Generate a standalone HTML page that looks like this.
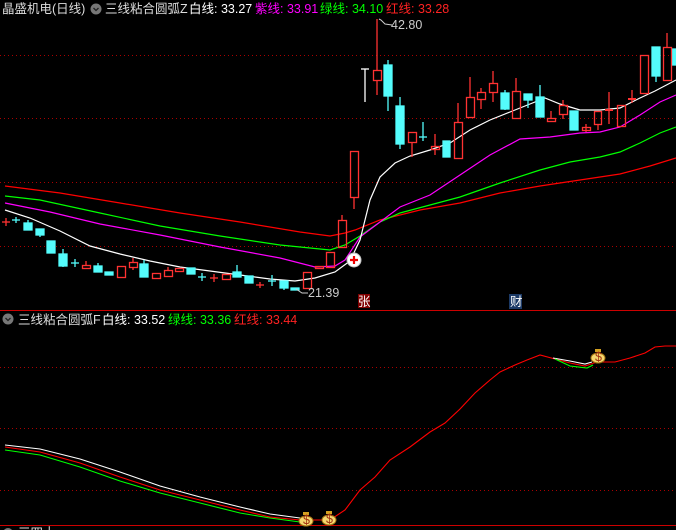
<!DOCTYPE html>
<html><head><meta charset="utf-8"><style>
html,body{margin:0;padding:0;background:#000;width:676px;height:530px;overflow:hidden}
svg{display:block}
text{font-family:"Liberation Sans","Noto Sans CJK SC",sans-serif;font-size:12.5px}
</style></head><body>
<svg width="676" height="530" viewBox="0 0 676 530" xmlns="http://www.w3.org/2000/svg">
<rect width="676" height="530" fill="#000"/>
<g stroke="#a00" stroke-width="1" stroke-dasharray="1,3">
<line x1="0" y1="55.5" x2="676" y2="55.5"/><line x1="0" y1="118.5" x2="676" y2="118.5"/>
<line x1="0" y1="182.5" x2="676" y2="182.5"/><line x1="0" y1="246.5" x2="676" y2="246.5"/>
<line x1="0" y1="367.5" x2="676" y2="367.5"/><line x1="0" y1="428.5" x2="676" y2="428.5"/>
<line x1="0" y1="490.5" x2="676" y2="490.5"/>
</g>
<line x1="0" y1="310.5" x2="676" y2="310.5" stroke="#c00"/>
<line x1="0" y1="525.5" x2="676" y2="525.5" stroke="#c00"/>

<g fill="none" stroke-width="1.2">
<polyline stroke="#f00" points="5,186 60,193 120,203 180,213 240,222 300,232 330,236 345,233 355,230 380,220 420,210 460,203 500,193 540,186 580,180 620,174 650,166 676,158"/>
<polyline stroke="#0f0" points="5,196 40,200 100,213 160,226 220,236 280,245 330,250 345,245 360,236 380,222 400,213 430,205 460,197 500,183 540,170 570,162 600,157 620,152 640,143 660,133 676,127"/>
<polyline stroke="#f0f" points="5,203 50,212 100,224 160,235 220,247 280,258 315,267 335,266 345,260 360,237 380,222 400,207 430,195 460,175 490,155 520,139 550,137 580,133 600,132 620,127 640,115 660,102 676,95"/>
<polyline stroke="#fff" points="5,210 30,218 60,231 90,246 120,254 150,261 180,267 210,271 240,275 270,279 295,281 315,278 335,272 350,261 360,240 370,200 380,177 395,163 410,156 430,150 450,143 470,130 490,120 510,112 530,104 545,98 560,104 580,110 600,110 620,108 640,98 655,91 676,80"/>
</g>

<g stroke-width="1.3">
<!-- cyan filled candles: x,top,bottom,wickTop,wickBot -->
<g fill="#54fcfc" stroke="#54fcfc">
<line x1="16" y1="217" x2="16" y2="223"/><line x1="12" y1="220" x2="20" y2="220"/>
<rect x="24" y="223" width="8" height="7"/><line x1="28" y1="220" x2="28" y2="223"/>
<rect x="36" y="229" width="8" height="6"/><line x1="40" y1="235" x2="40" y2="237"/>
<rect x="47" y="241" width="8" height="12"/>
<rect x="59" y="254" width="8" height="12"/><line x1="63" y1="249" x2="63" y2="267"/>
<line x1="75" y1="259" x2="75" y2="267"/><line x1="71" y1="263" x2="79" y2="263"/>
<rect x="94" y="266" width="8" height="6"/><line x1="98" y1="263" x2="98" y2="266"/>
<rect x="105" y="272" width="8" height="3"/>
<rect x="140" y="264" width="8" height="13"/><line x1="144" y1="260" x2="144" y2="264"/>
<rect x="187" y="268" width="8" height="6"/>
<line x1="202" y1="273" x2="202" y2="281"/><line x1="198" y1="277" x2="206" y2="277"/>
<rect x="233" y="272" width="8" height="5"/><line x1="237" y1="265" x2="237" y2="272"/>
<rect x="245" y="276" width="8" height="7"/>
<line x1="272" y1="275" x2="272" y2="286"/><line x1="268" y1="281" x2="276" y2="281"/>
<rect x="280" y="281" width="8" height="7"/><line x1="284" y1="288" x2="284" y2="290"/>
<rect x="291" y="288" width="8" height="2"/>
<rect x="384" y="65" width="8" height="31"/><line x1="388" y1="60" x2="388" y2="111"/>
<rect x="396" y="106" width="8" height="38"/><line x1="400" y1="97" x2="400" y2="149"/>
<line x1="423" y1="122" x2="423" y2="141"/><line x1="419" y1="137" x2="427" y2="137"/>
<rect x="443" y="141" width="7" height="16"/>
<rect x="501" y="93" width="8" height="16"/><line x1="505" y1="90" x2="505" y2="110"/>
<rect x="524" y="94" width="8" height="6"/><line x1="528" y1="100" x2="528" y2="108"/>
<rect x="536" y="97" width="8" height="20"/><line x1="540" y1="85" x2="540" y2="97"/>
<rect x="570" y="111" width="8" height="19"/>
<rect x="652" y="47" width="8" height="29"/><line x1="656" y1="76" x2="656" y2="82"/>
<rect x="672" y="49" width="5" height="16"/>
</g>
<g fill="none" stroke="#ff3232">
<line x1="6" y1="218" x2="6" y2="226"/><line x1="2" y1="222" x2="10" y2="222"/>
<rect x="82.5" y="265.5" width="8" height="3"/><line x1="86" y1="261" x2="86" y2="265"/>
<rect x="117.5" y="266.5" width="8" height="11"/>
<rect x="129.5" y="262.5" width="8" height="5"/><line x1="133" y1="258" x2="133" y2="262"/><line x1="133" y1="268" x2="133" y2="270"/>
<rect x="152.5" y="273.5" width="8" height="5"/>
<rect x="164.5" y="270.5" width="8" height="6"/><line x1="168" y1="267" x2="168" y2="270"/>
<rect x="175.5" y="268.5" width="8" height="3"/>
<line x1="214" y1="274" x2="214" y2="282"/><line x1="210" y1="278" x2="218" y2="278"/>
<rect x="222.5" y="274.5" width="8" height="5"/>
<line x1="260" y1="282" x2="260" y2="288"/><line x1="256" y1="285" x2="264" y2="285"/>
<rect x="303.5" y="272.5" width="8" height="16"/>
<rect x="315.5" y="266.5" width="8" height="2"/>
<rect x="326.5" y="252.5" width="8" height="15"/>
<rect x="338.5" y="220.5" width="8" height="27"/><line x1="342" y1="215" x2="342" y2="220"/>
<rect x="350.5" y="151.5" width="8" height="46"/><line x1="354" y1="198" x2="354" y2="209"/>
<rect x="373.5" y="70.5" width="8" height="10"/><line x1="377" y1="19" x2="377" y2="70"/><line x1="377" y1="81" x2="377" y2="95"/>
<rect x="408.5" y="132.5" width="8" height="10"/><line x1="412" y1="143" x2="412" y2="157"/>
<rect x="431.5" y="146.5" width="8" height="3"/><line x1="435" y1="134" x2="435" y2="146"/><line x1="435" y1="150" x2="435" y2="155"/>
<rect x="454.5" y="122.5" width="8" height="36"/><line x1="458" y1="103" x2="458" y2="122"/>
<rect x="466.5" y="97.5" width="8" height="20"/><line x1="470" y1="77" x2="470" y2="97"/>
<rect x="477.5" y="92.5" width="8" height="7"/><line x1="481" y1="88" x2="481" y2="92"/><line x1="481" y1="100" x2="481" y2="109"/>
<rect x="489.5" y="83.5" width="8" height="9"/><line x1="493" y1="71" x2="493" y2="83"/><line x1="493" y1="93" x2="493" y2="102"/>
<rect x="512.5" y="91.5" width="8" height="27"/><line x1="516" y1="78" x2="516" y2="91"/>
<rect x="547.5" y="118.5" width="8" height="3"/><line x1="551" y1="111" x2="551" y2="118"/>
<rect x="559.5" y="105.5" width="8" height="9"/><line x1="563" y1="100" x2="563" y2="105"/><line x1="563" y1="115" x2="563" y2="119"/>
<rect x="582.5" y="127.5" width="8" height="3"/><line x1="586" y1="124" x2="586" y2="132"/>
<rect x="594.5" y="111.5" width="7" height="13"/><line x1="598" y1="125" x2="598" y2="130"/>
<line x1="609" y1="92" x2="609" y2="124"/><line x1="605" y1="110" x2="613" y2="110" stroke-width="2"/>
<rect x="617.5" y="105.5" width="8" height="21"/>
<line x1="632" y1="90" x2="632" y2="103"/><line x1="628" y1="99" x2="636" y2="99" stroke-width="2"/>
<rect x="640.5" y="55.5" width="8" height="38"/>
<rect x="663.5" y="47.5" width="8" height="33"/><line x1="667" y1="33" x2="667" y2="47"/>
</g>
<line x1="365" y1="69" x2="365" y2="102" stroke="#fff"/><line x1="361" y1="69" x2="369" y2="69" stroke="#fff"/>
</g>

<!-- markers -->
<polyline points="379,19 381,20 385,24 392,25" fill="none" stroke="#ccc"/>
<text x="391" y="29" fill="#ccc">42.80</text>
<polyline points="296,289 302,293 308,293" fill="none" stroke="#ccc"/>
<text x="308" y="297" fill="#ccc">21.39</text>
<circle cx="354" cy="260" r="7" fill="#fff" stroke="#bbb"/>
<path d="M350 260h8M354 256v8" stroke="#e00" stroke-width="2.2"/>
<rect x="358" y="294" width="12" height="14" fill="#800000"/>
<text x="358" y="306" fill="#fff" font-size="12">张</text>
<rect x="509" y="294" width="13" height="15" fill="#1c3a66"/>
<text x="510" y="306" fill="#fff" font-size="12">财</text>

<!-- lower panel -->
<g fill="none" stroke-width="1.1">
<polyline stroke="#fff" points="5,445 40,449 80,459 120,472 160,486 200,497 240,507 270,514 300,518"/>
<polyline stroke="#0f0" points="5,450 40,455 80,467 120,481 160,493 200,503 240,513 270,518 300,522"/>
<polyline stroke="#f00" points="5,447 40,452 80,463 120,477 160,490 200,500 240,510 270,517 300,520 330,520 345,510 360,490 375,477 390,460 410,447 430,432 445,423 460,409 475,393 490,380 500,372 515,365 527,360 540,355 555,359 570,363 585,366 597,362 615,362 630,358 645,353 655,347 665,346 676,346"/>
<polyline stroke="#fff" points="553,358 570,361 585,364 592,362"/>
<polyline stroke="#0f0" points="555,359 570,366 587,368 593,365"/>
</g>
<g>
<ellipse cx="306" cy="521" rx="7" ry="5" fill="#f5d76e" stroke="#a07010"/><rect x="303" y="512" width="6" height="3" fill="#d4a020"/>
<text x="303" y="524" fill="#a03010" font-size="8">$</text>
<ellipse cx="329" cy="520" rx="7" ry="5" fill="#f5d76e" stroke="#a07010"/><rect x="326" y="511" width="6" height="3" fill="#d4a020"/>
<text x="326" y="523" fill="#a03010" font-size="8">$</text>
<ellipse cx="598" cy="358" rx="7" ry="5" fill="#f5d76e" stroke="#a07010"/><rect x="595" y="349" width="6" height="3" fill="#d4a020"/>
<text x="595" y="361" fill="#a03010" font-size="8">$</text>
</g>

<!-- headers -->
<text x="2" y="13" fill="#ddd">晶盛机电(日线)</text>
<circle cx="96" cy="9" r="5.5" fill="#777"/><path d="M93.5 8l2.5 2.5 2.5-2.5" stroke="#222" fill="none" stroke-width="1.3"/>
<text x="105" y="13" fill="#ddd">三线粘合圆弧Z</text>
<text x="189" y="13" fill="#fff">白线: 33.27</text>
<text x="255" y="13" fill="#f0f">紫线: 33.91</text>
<text x="320" y="13" fill="#0f0">绿线: 34.10</text>
<text x="386" y="13" fill="#f22">红线: 33.28</text>

<circle cx="8" cy="319" r="5.5" fill="#777"/><path d="M5.5 318l2.5 2.5 2.5-2.5" stroke="#222" fill="none" stroke-width="1.3"/>
<text x="18" y="324" fill="#ddd">三线粘合圆弧F</text>
<text x="102" y="324" fill="#fff">白线: 33.52</text>
<text x="168" y="324" fill="#0f0">绿线: 33.36</text>
<text x="234" y="324" fill="#f22">红线: 33.44</text>
<circle cx="8" cy="533" r="5" fill="#777"/>
<text x="18" y="537" fill="#ddd">三四十</text>
</svg>
</body></html>
